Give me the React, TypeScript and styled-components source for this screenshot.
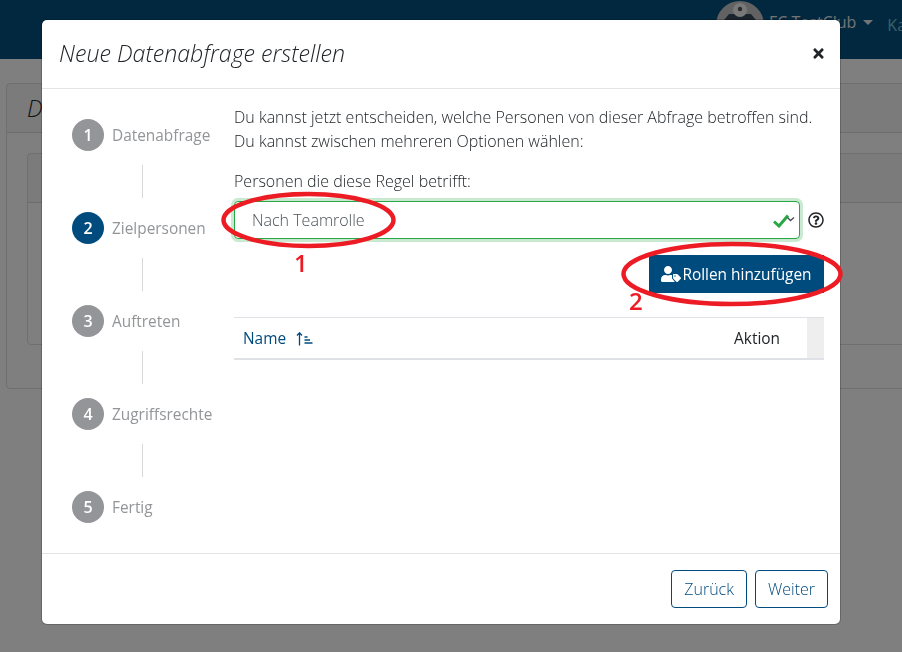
import React from 'react';
import styled, { createGlobalStyle } from 'styled-components';
import { FaRegQuestionCircle, FaTimes, FaUserTag } from 'react-icons/fa';

const steps = ['Datenabfrage', 'Zielpersonen', 'Auftreten', 'Zugriffsrechte', 'Fertig'];
const activeStep = 1;

const App: React.FC = () => (
  <>
    <GlobalStyle />
    <Navbar>
      <Avatar viewBox="0 0 48 48">
        <circle cx="24" cy="24" r="24" fill="#c4c4c4" />
        <path d="M3 25 L13 13 L35 13 L45 25 L45 40 L24 48 L3 40 Z" fill="#36485a" />
        <circle cx="24" cy="9" r="7" fill="#f2f2f2" />
        <circle cx="24" cy="8" r="2.2" fill="#555" />
      </Avatar>
      <ClubName>FC TestClub</ClubName>
      <Caret />
      <NavLink>Ka</NavLink>
    </Navbar>

    <Card>
      <CardHeader>
        <CardTitle>Datenabfragen</CardTitle>
      </CardHeader>
      <CardBody>
        <InnerCard>
          <InnerHeader />
        </InnerCard>
      </CardBody>
    </Card>

    <Backdrop>
      <Modal>
        <ModalHeader>
          <ModalTitle>Neue Datenabfrage erstellen</ModalTitle>
          <CloseButton><FaTimes size={15} /></CloseButton>
        </ModalHeader>

        <ModalBody>
          <Stepper>
            {steps.map((label, i) => (
              <React.Fragment key={label}>
                {i > 0 && <Connector />}
                <Step>
                  <StepNumber $active={i === activeStep}>{i + 1}</StepNumber>
                  <StepLabel>{label}</StepLabel>
                </Step>
              </React.Fragment>
            ))}
          </Stepper>

          <Content>
            <Intro>
              Du kannst jetzt entscheiden, welche Personen von dieser Abfrage betroffen sind.
              <br />
              Du kannst zwischen mehreren Optionen wählen:
            </Intro>
            <FieldLabel>Personen die diese Regel betrifft:</FieldLabel>
            <FieldRow>
              <SelectWrap>
                <RoleSelect defaultValue="team">
                  <option value="team">Nach Teamrolle</option>
                </RoleSelect>
                <SelectIcons viewBox="0 0 22 14">
                  <path d="M1 7.5 L6 12 L15 1.5" fill="none" stroke="#28a745" strokeWidth="3" />
                  <path d="M14.5 3.5 L17.5 6.5 L21 3.5" fill="none" stroke="#4a5056" strokeWidth="1.4" />
                </SelectIcons>
              </SelectWrap>
              <HelpIcon><FaRegQuestionCircle size={16} /></HelpIcon>
            </FieldRow>
            <ButtonRow>
              <AddButton>
                <FaUserTag size={20} />
                Rollen hinzufügen
              </AddButton>
            </ButtonRow>
            <TableHead>
              <NameCell>
                Name
                <SortIcon viewBox="0 0 17 14">
                  <path d="M3.5 13.5 V1 M1 3.5 L3.5 .8 L6 3.5" fill="none" stroke="#004b7d" strokeWidth="1.3" />
                  <path d="M8.5 5 H11.5 M8.5 8 H14 M8.5 11 H16.5" fill="none" stroke="#004b7d" strokeWidth="1.3" />
                </SortIcon>
              </NameCell>
              <ActionCell>Aktion</ActionCell>
              <ScrollGutter />
            </TableHead>
          </Content>
        </ModalBody>

        <ModalFooter>
          <OutlineButton>Zurück</OutlineButton>
          <OutlineButton>Weiter</OutlineButton>
        </ModalFooter>
      </Modal>
    </Backdrop>

    {/* rote Markierungen auf dem Screenshot */}
    <Marker $left={220} $top={191} $width={177} $height={58}>
      <svg width="177" height="58">
        <ellipse cx="88.5" cy="29" rx="85" ry="26" fill="none" stroke="#ed1c24" strokeWidth="4.5" />
      </svg>
    </Marker>
    <MarkerDigit $left={294} $top={246}>1</MarkerDigit>
    <Marker $left={620} $top={241} $width={224} $height={66}>
      <svg width="224" height="66">
        <ellipse cx="112" cy="33" rx="108.5" ry="30" fill="none" stroke="#ed1c24" strokeWidth="4.5" />
      </svg>
    </Marker>
    <MarkerDigit $left={629} $top={284}>2</MarkerDigit>
  </>
);

export default App;

const GlobalStyle = createGlobalStyle`
  html, body {
    margin: 0;
    height: 100%;
    overflow: hidden;
    background: #fff;
    font-family: "Open Sans", "Liberation Sans", sans-serif;
    color: #212529;
  }
  * {
    box-sizing: border-box;
  }
`;

const Navbar = styled.header`
  display: flex;
  align-items: flex-start;
  justify-content: flex-start;
  height: 59px;
  padding-left: 716px;
  background: #02507f;
  white-space: nowrap;
  overflow: hidden;
`;

const Avatar = styled.svg`
  flex: none;
  width: 48px;
  height: 48px;
  margin-top: 1px;
`;

const ClubName = styled.span`
  margin: 11px 0 0 5px;
  font-size: 16px;
  color: #e4e8ea;
`;

const Caret = styled.span`
  margin: 20px 0 0 7px;
  border-left: 5px solid transparent;
  border-right: 5px solid transparent;
  border-top: 5px solid #e4e8ea;
`;

const NavLink = styled.span`
  margin: 14px 0 0 14px;
  font-size: 16px;
  color: #6fc3d8;
`;

const Card = styled.section`
  margin: 24px -20px 0 6px;
  height: 306px;
  border: 1px solid rgba(0, 0, 0, 0.125);
  border-radius: 4px;
`;

const CardHeader = styled.div`
  height: 49px;
  padding: 8px 20px;
  background: rgba(0, 0, 0, 0.03);
  border-bottom: 1px solid rgba(0, 0, 0, 0.125);
`;

const CardTitle = styled.h3`
  margin: 0;
  font-size: 23.2px;
  font-weight: 300;
  font-style: italic;
`;

const CardBody = styled.div`
  padding: 20px 0 0 20px;
`;

const InnerCard = styled.div`
  height: 192px;
  border: 1px solid rgba(0, 0, 0, 0.125);
  border-radius: 4px;
`;

const InnerHeader = styled.div`
  height: 49px;
  background: rgba(0, 0, 0, 0.03);
  border-bottom: 1px solid rgba(0, 0, 0, 0.125);
`;

const Backdrop = styled.div`
  position: fixed;
  inset: 0;
  display: flex;
  justify-content: center;
  align-items: flex-start;
  padding: 20px 20px 0 0;
  background: rgba(0, 0, 0, 0.5);
`;

const Modal = styled.div`
  display: flex;
  flex-direction: column;
  width: 798px;
  height: 604px;
  background: #fff;
  border-radius: 5px;
  box-shadow: 0 0 0 1px rgba(0, 0, 0, 0.2);
`;

const ModalHeader = styled.div`
  flex: none;
  display: flex;
  align-items: center;
  justify-content: space-between;
  height: 69px;
  padding: 0 14px 0 17px;
  border-bottom: 1px solid #e4e4e4;
`;

const ModalTitle = styled.h5`
  margin: -2px 0 0;
  font-size: 23.2px;
  font-weight: 300;
  font-style: italic;
  color: #212529;
`;

const CloseButton = styled.button`
  display: flex;
  padding: 0;
  margin-top: -2px;
  border: 0;
  background: none;
  color: #212529;
`;

const ModalBody = styled.div`
  flex: 1;
  display: flex;
  padding: 16px 16px 0 30px;
`;

const Stepper = styled.div`
  flex: none;
  display: flex;
  flex-direction: column;
  width: 162px;
  padding-top: 14px;
`;

const Step = styled.div`
  display: flex;
  align-items: center;
  gap: 8px;
  height: 32px;
`;

const StepNumber = styled.span<{ $active?: boolean }>`
  display: flex;
  align-items: center;
  justify-content: center;
  width: 32px;
  height: 32px;
  border-radius: 50%;
  font-size: 16px;
  font-weight: 600;
  color: #fff;
  background: ${p => (p.$active ? '#004b7d' : '#939598')};
`;

const StepLabel = styled.span`
  font-size: 15.4px;
  color: #939598;
  white-space: nowrap;
`;

const Connector = styled.div`
  width: 1px;
  height: 33px;
  margin: 14px 0 14px 70px;
  background: #d8d8d8;
`;

const Content = styled.div`
  flex: 1;
  display: flex;
  flex-direction: column;
  min-width: 0;
`;

const Intro = styled.p`
  margin: 0;
  font-size: 16px;
  font-weight: 300;
  line-height: 24px;
  white-space: nowrap;
`;

const FieldLabel = styled.label`
  margin-top: 16px;
  font-size: 16px;
  font-weight: 300;
  line-height: 24px;
`;

const FieldRow = styled.div`
  display: flex;
  align-items: center;
  gap: 8px;
  margin-top: 8px;
`;

const SelectWrap = styled.div`
  position: relative;
  flex: 1;
`;

const RoleSelect = styled.select`
  display: block;
  width: 100%;
  height: 38px;
  padding: 0 12px 0 17px;
  appearance: none;
  background: #fff;
  border: 1px solid #28a745;
  border-radius: 4px;
  box-shadow: 0 0 0 3px rgba(40, 167, 69, 0.25);
  font-family: inherit;
  font-size: 16px;
  font-weight: 300;
  color: #495057;
  outline: none;
`;

const SelectIcons = styled.svg`
  position: absolute;
  right: 5px;
  top: 13px;
  width: 22px;
  height: 14px;
`;

const HelpIcon = styled.span`
  display: flex;
  color: #212529;
`;

const ButtonRow = styled.div`
  display: flex;
  justify-content: flex-end;
  margin-top: 16px;
`;

const AddButton = styled.button`
  display: flex;
  align-items: center;
  justify-content: center;
  gap: 1px;
  width: 175px;
  height: 38px;
  padding: 0;
  border: 0;
  background: #004b7d;
  color: #fff;
  font-family: inherit;
  font-size: 15.4px;
  font-weight: 400;
  white-space: nowrap;
`;

const TableHead = styled.div`
  display: flex;
  align-items: center;
  height: 43px;
  margin-top: 24px;
  border-top: 1px solid #dee2e6;
  border-bottom: 2px solid #dee2e6;
  font-size: 15.4px;
`;

const NameCell = styled.div`
  flex: 1;
  display: flex;
  align-items: center;
  gap: 10px;
  padding-left: 9px;
  font-weight: 400;
  color: #004b7d;
`;

const SortIcon = styled.svg`
  width: 17px;
  height: 14px;
  margin-top: 2px;
`;

const ActionCell = styled.div`
  padding-right: 27px;
  font-weight: 400;
`;

const ScrollGutter = styled.div`
  align-self: stretch;
  width: 17px;
  background: #eee;
`;

const ModalFooter = styled.div`
  flex: none;
  display: flex;
  justify-content: flex-end;
  gap: 8px;
  height: 71px;
  padding: 16px 12px 0 0;
  border-top: 1px solid #e4e4e4;
`;

const OutlineButton = styled.button`
  height: 38px;
  padding: 0 12px;
  background: #fff;
  border: 1px solid #004b7d;
  border-radius: 4px;
  color: #004b7d;
  font-family: inherit;
  font-size: 16px;
  font-weight: 300;
`;

const Marker = styled.div<{ $left: number; $top: number; $width: number; $height: number }>`
  position: fixed;
  left: ${p => p.$left}px;
  top: ${p => p.$top}px;
  width: ${p => p.$width}px;
  height: ${p => p.$height}px;
  pointer-events: none;

  svg {
    display: block;
  }
`;

const MarkerDigit = styled.span<{ $left: number; $top: number }>`
  position: fixed;
  left: ${p => p.$left}px;
  top: ${p => p.$top}px;
  font-family: "Open Sans", sans-serif;
  font-size: 24px;
  font-weight: 600;
  line-height: 33px;
  color: #ed1c24;
`;
